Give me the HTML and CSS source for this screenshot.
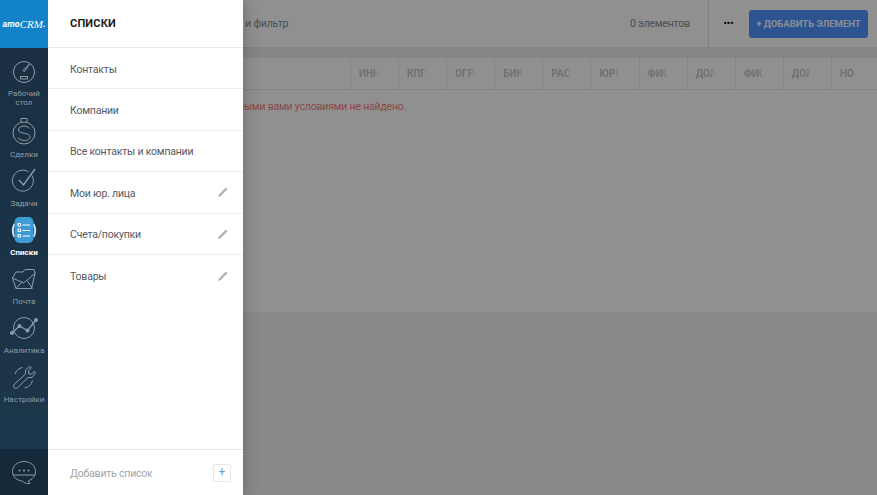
FILE: index.html
```html
<!DOCTYPE html>
<html lang="ru">
<head>
  <meta charset="UTF-8" />
  <meta name="viewport" content="width=device-width, initial-scale=1.0"/>
  <title>Списки</title>
  <link rel="stylesheet" href="styles.css">
</head>
<body>
  <nav class="nav">
    <div class="logo"><b>amo</b><i>CRM</i><b>.</b></div>
    <div class="nav-items">
      <a class="nav-item">
        <svg class="nav-icon" viewBox="0 0 28 28"><circle cx="14" cy="13" r="10.500"/><path d="M19.500 5l-5 7.500-1.500-1z"/><path d="M10.500 17.500h7v2.500h-7z"/></svg>
        <span class="nav-label">Рабочий<br>стол</span>
      </a>
      <a class="nav-item">
        <svg class="nav-icon" viewBox="0 0 28 28"><circle cx="14" cy="15" r="11"/><path d="M11 4.200V.5h6v3.700"/><path d="M19.500 10.500c-1-1.500-3-2.500-5.500-2.500-3 0-5.500 1.500-5.500 3.800 0 4.700 11.500 2.200 11.500 7 0 2.500-2.500 3.700-5.500 3.700-3 0-5.500-1.200-6.500-3"/></svg>
        <span class="nav-label">Сделки</span>
      </a>
      <a class="nav-item">
        <svg class="nav-icon" viewBox="0 0 28 28"><path d="M22 8.500a10.500 10.500 0 1 1-3.500-3.700"/><path d="M9 13l4.500 5L25 2" stroke-width="1.400"/></svg>
        <span class="nav-label">Задачи</span>
      </a>
      <a class="nav-item active">
        <svg class="nav-icon" viewBox="0 0 28 28"><path class="list-ear" d="M4.500 8a14 14 0 0 0 0 13M23.500 8a14 14 0 0 1 0 13"/><rect class="list-body" x="4.500" y="1" width="19" height="26" rx="5"/><path class="list-line" d="M8 7.500h2.500V10H8zM8 13h2.500v2.500H8zM8 18.500h2.500V21H8zM12.500 9h7.500M12.500 14.500h7.500M12.500 20h7.500"/></svg>
        <span class="nav-label">Списки</span>
      </a>
      <a class="nav-item">
        <svg class="nav-icon" viewBox="0 0 28 28"><path d="M2.500 13l3.500-6h7l2-2.500h9l1 4-3.500 15H6z"/><path d="M2.500 13l11 5 12-10M6 23.500l6.500-7M22.500 23.500l-5.500-8"/></svg>
        <span class="nav-label">Почта</span>
      </a>
      <a class="nav-item">
        <svg class="nav-icon" viewBox="0 0 28 28"><circle cx="14" cy="14" r="10.500"/><path d="M2 19l7.500-7 8 4.500L26 6" stroke-width="1.300"/><circle class="dot" cx="2" cy="19" r="2"/><circle class="dot" cx="9.500" cy="12" r="2"/><circle class="dot" cx="17.500" cy="16.500" r="2"/><circle class="dot" cx="26" cy="6" r="2"/></svg>
        <span class="nav-label">Аналитика</span>
      </a>
      <a class="nav-item">
        <svg class="nav-icon" viewBox="0 0 28 28"><path d="M19.500 3.500l-4 3.500v4L4.500 21c-2.500 2.700.5 5.500 3 3.800L18 14.500h4l3.200-4-.8-2.300-2.700 2.800h-3V7.500l2.800-3z"/><path d="M5 11a10 10 0 0 1 7.500-6.500M22.500 17.500a10 10 0 0 1-8 7.500"/></svg>
        <span class="nav-label">Настройки</span>
      </a>
    </div>
    <div class="nav-chat">
      <svg class="nav-icon" viewBox="0 0 28 28"><path d="M14 3.500c6.500 0 11.500 4.300 11.500 10 0 4.700-3.300 8-7.500 9.500l2 2.500c-3 .5-5.700-.5-7.700-2.500C7 22.500 2.500 19 2.500 13.500c0-5.700 5-10 11.500-10z"/><path d="M3 17h22"/><circle class="dot" cx="9.500" cy="12.500" r="1"/><circle class="dot" cx="14" cy="12.500" r="1"/><circle class="dot" cx="18.500" cy="12.500" r="1"/></svg>
    </div>
  </nav>

  <main class="main">
    <header class="toolbar">
      <div class="search">Поиск и фильтр</div>
      <div class="counter">0 элементов</div>
      <div class="more">•••</div>
      <button class="add-button">+ Добавить элемент</button>
    </header>
    <div class="strip"></div>
    <section class="table">
      <div class="table-head">
        <div class="col-name"></div>
        <div class="col">ИНН</div>
        <div class="col">КПП</div>
        <div class="col">ОГРН</div>
        <div class="col">БИК</div>
        <div class="col">РАС</div>
        <div class="col">ЮРИ</div>
        <div class="col">ФИО</div>
        <div class="col">ДОЛ</div>
        <div class="col">ФИО</div>
        <div class="col">ДОЛ</div>
        <div class="col">НО</div>
      </div>
      <div class="empty">Записей с заданными вами условиями не найдено.</div>
    </section>
  </main>

  <div class="overlay"></div>

  <aside class="panel">
    <h2 class="panel-title">Списки</h2>
    <ul class="lists">
      <li class="list-row">Контакты</li>
      <li class="list-row">Компании</li>
      <li class="list-row">Все контакты и компании</li>
      <li class="list-row">Мои юр. лица
        <svg class="pencil" viewBox="0 0 10 10"><path d="M0 10l.8-2.600L7.800.4l1.800 1.800-7 7z"/></svg>
      </li>
      <li class="list-row">Счета/покупки
        <svg class="pencil" viewBox="0 0 10 10"><path d="M0 10l.8-2.600L7.800.4l1.800 1.800-7 7z"/></svg>
      </li>
      <li class="list-row">Товары
        <svg class="pencil" viewBox="0 0 10 10"><path d="M0 10l.8-2.600L7.800.4l1.800 1.800-7 7z"/></svg>
      </li>
    </ul>
    <div class="panel-footer">
      <span class="add-list">Добавить список</span>
      <button class="plus-button">+</button>
    </div>
  </aside>
</body>
</html>
```

FILE: styles.css
```css
* {
  box-sizing: border-box;
}

body {
  margin: 0;
  height: 100vh;
  display: flex;
  position: relative;
  overflow: hidden;
  font-family: Roboto, 'Noto Sans', sans-serif;
  background: #e9e9e9;
}

/* left nav */
.nav {
  width: 48px;
  flex: none;
  display: flex;
  flex-direction: column;
  position: relative;
  z-index: 3;
  background: linear-gradient(#1a2f41, #1c374c);
}

.logo {
  height: 48px;
  flex: none;
  display: flex;
  align-items: center;
  justify-content: center;
  background: #1282c9;
  color: #fff;
  font-size: 9px;
  font-style: italic;
  white-space: nowrap;
}

.logo i {
  font-family: 'Liberation Serif', serif;
  font-size: 11px;
}

.nav-items {
  flex: 1;
  padding-top: 11px;
}

.nav-item {
  display: flex;
  flex-direction: column;
  align-items: center;
  margin-bottom: 8px;
  color: #8f9daa;
}

.nav-icon {
  width: 28px;
  height: 28px;
  display: block;
  fill: none;
  stroke: #8f9daa;
  stroke-width: 1;
}

.nav-label {
  font-size: 8px;
  line-height: 9px;
  height: 9px;
  margin-top: 4px;
  text-align: center;
  white-space: nowrap;
}

.nav-item:first-child {
  margin-bottom: 10px;
}

.nav-item:first-child .nav-label {
  height: 19px;
  margin-top: 2px;
}

.nav-item.active {
  color: #fff;
  font-weight: 700;
}

.dot {
  fill: #8f9daa;
  stroke: none;
}

.list-body {
  fill: #3d9bd6;
  stroke: none;
}

.list-ear {
  stroke: #cfe4f2;
  stroke-width: 2;
}

.list-line {
  stroke: #fff;
}

.nav-chat {
  height: 46px;
  flex: none;
  display: flex;
  align-items: center;
  justify-content: center;
  background: #14293a;
}

/* list behind the overlay */
.main {
  flex: 1;
  min-width: 0;
  height: 312px;
  background: #f2f2f2;
  display: flex;
  flex-direction: column;
}

.toolbar {
  height: 47px;
  flex: none;
  display: flex;
  align-items: center;
  padding-right: 9px;
  font-size: 10.500px;
  letter-spacing: -.2px;
  background: #f5f5f5;
  color: #7c868f;
}

.search {
  flex: 1;
  padding-left: 165px;
}

.counter {
  width: 78px;
}

.more {
  width: 40px;
  height: 47px;
  line-height: 47px;
  border-left: 1px solid #dcdcdc;
  text-align: center;
  font-size: 10px;
  letter-spacing: 0;
  color: #000;
  flex: none;
}

.add-button {
  width: 119px;
  height: 28px;
  margin-left: 1px;
  padding: 0;
  border: none;
  border-radius: 3px;
  background: #4a8ff5;
  color: #eaf1fb;
  font-family: inherit;
  font-size: 9.500px;
  font-weight: 700;
  text-transform: uppercase;
  white-space: nowrap;
}

.strip {
  height: 11px;
  flex: none;
  background: #e4e4e4;
  border-top: 1px solid #dedede;
}

.table {
  flex: 1;
  background: #f5f5f5;
}

.table-head {
  height: 32px;
  display: flex;
  border-bottom: 1px solid #e2e2e2;
}

.col-name {
  width: 302px;
  flex: none;
}

.col {
  width: 48.100px;
  flex: none;
  padding: 0 8px;
  border-left: 1px solid #e0e0e0;
  overflow: hidden;
  white-space: nowrap;
  font-size: 10px;
  font-weight: 700;
  line-height: 32px;
  color: #bcc0c5;
  -webkit-mask-image: linear-gradient(90deg, #000 24px, transparent 29px);
}

.empty {
  padding: 10px 0 0 112px;
  font-size: 10.500px;
  letter-spacing: -.2px;
  color: #f07c7c;
  white-space: nowrap;
}

.overlay {
  position: absolute;
  top: 0;
  bottom: 0;
  left: 48px;
  right: 0;
  z-index: 1;
  background: rgba(0, 0, 0, .41);
}

/* sliding panel */
.panel {
  position: absolute;
  top: 0;
  bottom: 0;
  left: 48px;
  width: 195px;
  z-index: 2;
  display: flex;
  flex-direction: column;
  background: #fff;
  box-shadow: 0 0 16px rgba(0, 0, 0, .25);
}

.panel-title {
  height: 48px;
  flex: none;
  margin: 0;
  padding-left: 22px;
  border-bottom: 1px solid #e8e8e8;
  font-size: 11px;
  font-weight: 700;
  line-height: 47px;
  letter-spacing: .2px;
  text-transform: uppercase;
  color: #1c1c1c;
}

.lists {
  flex: 1;
  margin: 0;
  padding: 0;
  list-style: none;
}

.list-row {
  height: 41.400px;
  display: flex;
  align-items: center;
  justify-content: space-between;
  padding: 2px 15px 0 22px;
  border-bottom: 1px solid #ececec;
  font-size: 10.500px;
  letter-spacing: -.2px;
  color: #55595d;
}

.list-row:last-child {
  border-bottom: none;
}

.pencil {
  width: 10px;
  height: 10px;
  margin-top: -2px;
  fill: #b5b5b5;
}

.panel-footer {
  height: 46px;
  flex: none;
  display: flex;
  align-items: center;
  justify-content: space-between;
  padding: 0 12px 0 22px;
  border-top: 1px solid #e6e6e6;
  font-size: 10.500px;
  letter-spacing: -.2px;
  color: #a0a4a8;
}

.add-list {
  padding-top: 2px;
}

.plus-button {
  width: 18px;
  height: 18px;
  padding: 0;
  border: 1px solid #e4e9ee;
  border-radius: 2px;
  background: #fff;
  color: #7f9fc4;
  font-family: inherit;
  font-size: 12px;
  line-height: 15px;
}
```
